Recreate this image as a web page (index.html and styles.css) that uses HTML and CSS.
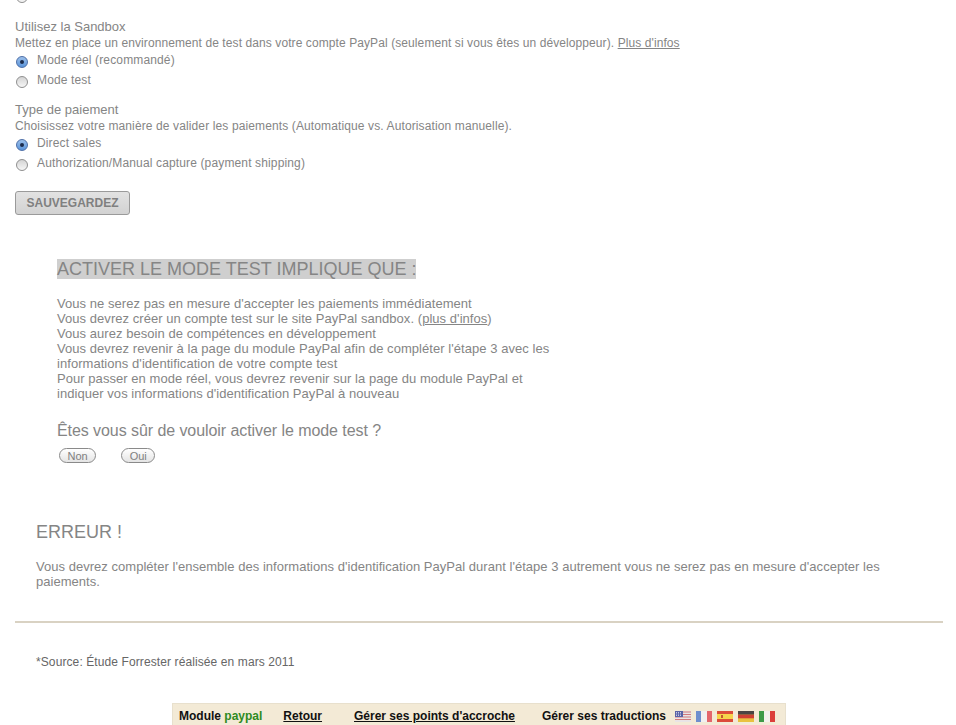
FILE: index.html
```html
<!DOCTYPE html>
<html>
<head>
  <meta charset="utf-8">
  <title>Module PayPal</title>
  <link rel="stylesheet" href="styles.css">
</head>
<body>

  <form class="settings">
    <div class="radio-row"><span class="radio"></span><span>Non</span></div>

    <div class="group sandbox">
      <div class="group-title">Utilisez la Sandbox</div>
      <div class="group-desc">Mettez en place un environnement de test dans votre compte PayPal (seulement si vous êtes un développeur). <a href="#">Plus d'infos</a></div>
      <div class="radio-row"><span class="radio on"></span><span>Mode réel (recommandé)</span></div>
      <div class="radio-row"><span class="radio"></span><span>Mode test</span></div>
    </div>

    <div class="group">
      <div class="group-title">Type de paiement</div>
      <div class="group-desc wide">Choisissez votre manière de valider les paiements (Automatique vs. Autorisation manuelle).</div>
      <div class="radio-row"><span class="radio on"></span><span>Direct sales</span></div>
      <div class="radio-row"><span class="radio"></span><span>Authorization/Manual capture (payment shipping)</span></div>
    </div>

    <button type="button" class="save">SAUVEGARDEZ</button>
  </form>

  <section class="confirm">
    <h2><span class="mark">ACTIVER LE MODE TEST IMPLIQUE QUE :</span></h2>
    <p>
      Vous ne serez pas en mesure d'accepter les paiements immédiatement<br>
      Vous devrez créer un compte test sur le site PayPal sandbox. (<a href="#">plus d'infos</a>)<br>
      Vous aurez besoin de compétences en développement<br>
      Vous devrez revenir à la page du module PayPal afin de compléter l'étape 3 avec les<br>
      informations d'identification de votre compte test<br>
      Pour passer en mode réel, vous devrez revenir sur la page du module PayPal et<br>
      indiquer vos informations d'identification PayPal à nouveau
    </p>
    <h3>Êtes vous sûr de vouloir activer le mode test ?</h3>
    <div class="choices">
      <button type="button" class="pill">Non</button>
      <button type="button" class="pill">Oui</button>
    </div>
  </section>

  <section class="error">
    <h2>ERREUR !</h2>
    <p>Vous devrez compléter l'ensemble des informations d'identification PayPal durant l'étape 3 autrement vous ne serez pas en mesure d'accepter les paiements.</p>
  </section>

  <hr class="rule">

  <p class="source">*Source: Étude Forrester réalisée en mars 2011</p>

  <div class="module-bar">
    <span class="module-name">Module <span class="green">paypal</span></span>
    <a href="#" class="back">Retour</a>
    <a href="#" class="hooks">Gérer ses points d'accroche</a>
    <span class="trans">Gérer ses traductions</span>
    <span class="flags">
      <svg class="flag" viewBox="0 0 16 11"><rect width="16" height="11" fill="#e9e4e6"/><path d="M0 1h16M0 3.500h16M0 6h16M0 8.500h16" stroke="#d3787c" stroke-width="1.200"/><rect width="8" height="6" fill="#5a62a6"/><path d="M1 1.500h6M1 3h6M1 4.500h6" stroke="#c5c9e4" stroke-dasharray="1 1"/></svg>
      <svg class="flag" viewBox="0 0 16 11"><rect width="16" height="11" fill="#f2f0f0"/><rect width="5" height="11" fill="#6f8fce"/><rect x="11" width="5" height="11" fill="#e4666c"/></svg>
      <svg class="flag" viewBox="0 0 16 11"><rect width="16" height="11" fill="#dc4b3a"/><rect y="3" width="16" height="5" fill="#f6d34c"/><rect x="4" y="4" width="2" height="3" fill="#c2592f"/></svg>
      <svg class="flag" viewBox="0 0 16 11"><rect width="16" height="11" fill="#e9c23f"/><rect width="16" height="3.700" fill="#4a4544"/><rect y="3.700" width="16" height="3.600" fill="#cf4034"/></svg>
      <svg class="flag" viewBox="0 0 16 11"><rect width="16" height="11" fill="#f4f1ec"/><rect width="5" height="11" fill="#3f9a48"/><rect x="11" width="5" height="11" fill="#dc3f3a"/></svg>
    </span>
  </div>

</body>
</html>
```

FILE: styles.css
```css
html, body {
  height: 725px;
  overflow: hidden;
}

body {
  margin: 0;
  font-family: "Liberation Sans", Arial, sans-serif;
  font-size: 12px;
  color: #858585;
  background: #fff;
}

a {
  color: inherit;
}

.settings {
  margin: -15px 0 0 15px;
  letter-spacing: 0.09px;
}

.radio-row {
  display: flex;
  align-items: center;
  gap: 9px;
  height: 20px;
  letter-spacing: 0.14px;
}

.radio {
  width: 10px;
  height: 10px;
  margin: 3px 0 0 1px;
  border: 1px solid #8f8f8f;
  border-radius: 50%;
  background: linear-gradient(#d4d4d4, #f6f6f6);
  display: flex;
  align-items: center;
  justify-content: center;
}

.radio.on {
  border-color: #4d6fa8;
  background: linear-gradient(#9cc0ea, #5a94da);
}

.radio.on::after {
  content: "";
  width: 4px;
  height: 4px;
  border-radius: 50%;
  background: #1c2c4c;
}

.group {
  margin-top: 12px;
}

.sandbox {
  margin-top: 14px;
}

.group-title {
  font-size: 13px;
  line-height: 16px;
  letter-spacing: 0;
}

.group-desc {
  line-height: 16px;
  margin-bottom: -1px;
}

.wide {
  letter-spacing: 0.12px;
}

.save {
  display: block;
  margin-top: 18px;
  width: 115px;
  height: 24px;
  padding: 0;
  font-family: inherit;
  font-size: 12px;
  font-weight: bold;
  color: #808080;
  background: linear-gradient(#e2e2e2, #d2d2d2);
  border: 1px solid #9a9a9a;
  border-radius: 3px;
}

.confirm {
  margin: 43px 0 0 57px;
  width: 510px;
}

.confirm h2 {
  margin: 0;
  font-size: 18px;
  font-weight: normal;
  line-height: 22px;
}

.mark {
  background: #cfcfcf;
}

.confirm p {
  margin: 16px 0 0;
  font-size: 13px;
  line-height: 15px;
  letter-spacing: 0.05px;
}

.confirm h3 {
  margin: 20px 0 0;
  font-size: 16px;
  font-weight: normal;
  line-height: 20px;
  letter-spacing: -0.07px;
}

.choices {
  display: flex;
  gap: 25px;
  margin: 7px 0 0 2px;
}

.pill {
  height: 15px;
  padding: 0 7.5px;
  font-family: inherit;
  font-size: 11px;
  line-height: 12px;
  color: #808080;
  background: linear-gradient(#fff, #e4e4e4);
  border: 1px solid #8a8a8a;
  border-radius: 8px;
}

.error {
  margin: 58px 0 0 36px;
  width: 860px;
}

.error h2 {
  margin: 0;
  font-size: 18px;
  font-weight: normal;
  line-height: 22px;
}

.error p {
  margin: 16px 0 0;
  font-size: 13px;
  line-height: 15px;
  letter-spacing: 0.03px;
}

.rule {
  margin: 32px 13px 0 15px;
  height: 2px;
  border: 0;
  background: #d9d2c3;
}

.source {
  margin: 32px 0 0 36px;
  line-height: 14px;
  color: #666;
  letter-spacing: 0.1px;
}

.module-bar {
  display: flex;
  align-items: center;
  margin: 34px 0 0 172px;
  width: 614px;
  height: 28px;
  box-sizing: border-box;
  padding: 0 0 2px 6px;
  font-weight: bold;
  color: #111;
  background: #f3ead6;
  border: 1px solid #e8e0cd;
}

.module-bar a {
  color: #111;
}

.green {
  color: #2e8b22;
}

.back {
  margin-left: 21px;
}

.hooks {
  margin-left: 32px;
}

.trans {
  margin-left: 27px;
}

.flags {
  display: flex;
  gap: 5px;
  margin-left: 9px;
}

.flag {
  width: 16px;
  height: 11px;
  display: block;
}
```
